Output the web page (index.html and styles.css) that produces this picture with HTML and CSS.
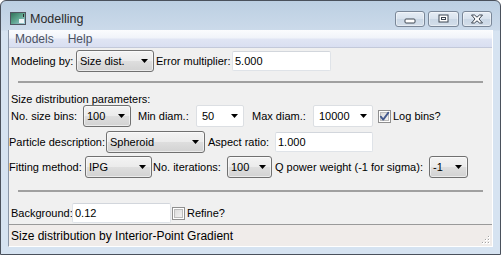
FILE: index.html
```html
<!DOCTYPE html>
<html>
<head>
    <title>Modelling</title>
    <meta charset="utf-8">
    <link rel="stylesheet" href="styles.css">
</head>
<body>
    <div class="window">
        <!-- 标题栏 -->
        <div class="titlebar">
            <svg class="app-icon" width="16" height="13" viewBox="0 0 16 13">
                <defs>
                    <linearGradient id="iconFill" x1="0" y1="0" x2="1" y2="1">
                        <stop offset="0" stop-color="#2f6e55"/>
                        <stop offset="0.5" stop-color="#5fa58f"/>
                        <stop offset="1" stop-color="#a9cfe3"/>
                    </linearGradient>
                </defs>
                <rect x="0.5" y="0.5" width="15" height="12" fill="url(#iconFill)" stroke="#505560"/>
                <rect x="9" y="7" width="5" height="4" fill="#eef3f6"/>
                <rect x="13" y="2" width="1" height="3" fill="#2b2b2b"/>
            </svg>
            <span class="title">Modelling</span>
            <div class="caption-buttons">
                <button class="cap-btn cap-min">
                    <svg width="12" height="6" viewBox="0 0 12 6"><rect x="1" y="1" width="10" height="4" rx="1" fill="#fff" stroke="#3d4652"/></svg>
                </button>
                <button class="cap-btn cap-max">
                    <svg width="11" height="9" viewBox="0 0 11 9"><rect x="1" y="1" width="9" height="7" fill="#fff" stroke="#3d4652"/><rect x="3" y="3" width="5" height="3" fill="#3d4652"/><rect x="4" y="4" width="3" height="1" fill="#fff"/></svg>
                </button>
                <button class="cap-btn cap-close">
                    <svg width="14" height="10" viewBox="0 0 14 10"><path d="M1.5 1h3l2.5 2.2L9.5 1h3L9 5l3.5 4h-3L7 6.8 4.5 9h-3L5 5z" fill="#fff" stroke="#3d4652" stroke-linejoin="round"/></svg>
                </button>
            </div>
        </div>

        <div class="client">
            <!-- 菜单栏 -->
            <div class="menubar">
                <span class="menu-item">Models</span>
                <span class="menu-item">Help</span>
            </div>

            <div class="content">
                <div class="row">
                    <span class="lab w65">Modeling by:</span>
                    <div class="combo w78"><span>Size dist.</span><svg class="arrow" viewBox="0 0 7 4"><path d="M0 0h7L3.5 4z"/></svg></div>
                    <span class="lab w78 pl2">Error multiplier:</span>
                    <div class="input w99">5.000</div>
                </div>

                <div class="sep sep-top"></div>

                <div class="group-title">Size distribution parameters:</div>

                <div class="row">
                    <span class="lab w72">No. size bins:</span>
                    <div class="combo w48"><span>100</span><svg class="arrow" viewBox="0 0 7 4"><path d="M0 0h7L3.5 4z"/></svg></div>
                    <span class="lab w65 pl7">Min diam.:</span>
                    <div class="combo edit w48"><span>50</span><svg class="arrow" viewBox="0 0 7 4"><path d="M0 0h7L3.5 4z"/></svg></div>
                    <span class="lab w69 pl8">Max diam.:</span>
                    <div class="combo edit w60"><span>10000</span><svg class="arrow" viewBox="0 0 7 4"><path d="M0 0h7L3.5 4z"/></svg></div>
                    <span class="checkbox ml5 checked"><svg width="11" height="11" viewBox="0 0 11 11"><path d="M1.8 5.6 L4.2 8.6 L9.4 1.6" fill="none" stroke="#44598d" stroke-width="1.8" stroke-linecap="round" stroke-linejoin="round"/></svg></span>
                    <span class="lab ml2">Log bins?</span>
                </div>

                <div class="row row-tight gap4">
                    <span class="lab w97">Particle description:</span>
                    <div class="combo w99"><span>Spheroid</span><svg class="arrow" viewBox="0 0 7 4"><path d="M0 0h7L3.5 4z"/></svg></div>
                    <span class="lab w70 pl3">Aspect ratio:</span>
                    <div class="input w98">1.000</div>
                </div>

                <div class="row row-tight gap3">
                    <span class="lab w76">Fitting method:</span>
                    <div class="combo w67"><span>IPG</span><svg class="arrow" viewBox="0 0 7 4"><path d="M0 0h7L3.5 4z"/></svg></div>
                    <span class="lab w75 pl1">No. iterations:</span>
                    <div class="combo w45"><span>100</span><svg class="arrow" viewBox="0 0 7 4"><path d="M0 0h7L3.5 4z"/></svg></div>
                    <span class="lab w157 pl3">Q power weight (-1 for sigma):</span>
                    <div class="combo w39"><span>-1</span><svg class="arrow" viewBox="0 0 7 4"><path d="M0 0h7L3.5 4z"/></svg></div>
                </div>

                <div class="sep sep-bottom"></div>

                <div class="row row-last">
                    <span class="lab w61">Background:</span>
                    <div class="input w99">0.12</div>
                    <span class="checkbox ml1"></span>
                    <span class="lab ml2">Refine?</span>
                </div>
            </div>

            <!-- 状态栏 -->
            <div class="statusbar">
                <span>Size distribution by Interior-Point Gradient</span>
                <svg class="grip" width="9" height="9" viewBox="0 0 9 9">
                    <rect x="6" y="0" width="2" height="2" fill="#fff"/><rect x="6" y="0" width="1" height="1" fill="#a3a3a3"/>
                    <rect x="3" y="3" width="2" height="2" fill="#fff"/><rect x="3" y="3" width="1" height="1" fill="#a3a3a3"/>
                    <rect x="6" y="3" width="2" height="2" fill="#fff"/><rect x="6" y="3" width="1" height="1" fill="#a3a3a3"/>
                    <rect x="0" y="6" width="2" height="2" fill="#fff"/><rect x="0" y="6" width="1" height="1" fill="#a3a3a3"/>
                    <rect x="3" y="6" width="2" height="2" fill="#fff"/><rect x="3" y="6" width="1" height="1" fill="#a3a3a3"/>
                    <rect x="6" y="6" width="2" height="2" fill="#fff"/><rect x="6" y="6" width="1" height="1" fill="#a3a3a3"/>
                </svg>
            </div>
        </div>
    </div>
</body>
</html>
```

FILE: styles.css
```css
/* 全局 */
body {
    margin: 0;
    background: #fff;
    font-family: "Liberation Sans", Arial, sans-serif;
    font-size: 11px;
    color: #000;
}

/* 窗口外框 */
.window {
    width: 501px;
    height: 255px;
    box-sizing: border-box;
    border: 1px solid #4a515c;
    border-radius: 6px 6px 0 0;
    background: linear-gradient(#bccfe2, #cbdaea 29px, #d6e3f1 30px);
    display: flex;
    flex-direction: column;
}

/* 标题栏 */
.titlebar {
    height: 29px;
    box-sizing: border-box;
    padding: 6px 8px 0 9px;
    display: flex;
    align-items: center;
}
.app-icon {
    display: block;
}
.title {
    margin-left: 4px;
    font-size: 12.5px;
    color: #2b2b2b;
}
.caption-buttons {
    margin-left: auto;
    display: flex;
    gap: 3px;
}
.cap-btn {
    width: 30px;
    height: 16px;
    padding: 0;
    border: 1px solid #7a8798;
    border-radius: 3px;
    background: linear-gradient(#e6edf5, #d8e2ed 50%, #cad7e5 51%, #d3deea);
    box-shadow: inset 0 0 0 1px rgba(255, 255, 255, 0.45);
    display: flex;
    align-items: center;
    justify-content: center;
}
.cap-btn svg {
    display: block;
}
.cap-min svg {
    margin-top: 5px;
}
.cap-max {
    width: 31px;
}

/* 客户区 */
.client {
    flex: 1;
    margin: 0 7px 7px;
    border-left: 1px solid #8b97a8;
    border-right: 1px solid #fff;
    border-bottom: 1px solid #fff;
    background: #f0f0f0;
    display: flex;
    flex-direction: column;
}

/* 菜单栏 */
.menubar {
    height: 18px;
    box-sizing: border-box;
    border-bottom: 1px solid #c3c9da;
    background: linear-gradient(#fbfcfe, #f1f4fa 45%, #e0e5f4 55%, #d9dff1);
    display: flex;
    align-items: center;
    gap: 2px;
}
.menu-item {
    padding: 0 6px;
    font-size: 12px;
    color: #4a5162;
}

/* 内容 */
.content {
    flex: 1;
    padding-top: 2px;
}
.row {
    height: 22px;
    padding-left: 2px;
    display: flex;
    align-items: center;
}
.row-tight {
    padding-left: 0;
}
.gap4 { margin-top: 4px; }
.gap3 { margin-top: 3px; }
.row-last { margin-top: 10px; }

.sep {
    height: 2px;
    margin: 0 9px;
    background: #a0a0a0;
}
.sep-top { margin-top: 9px; }
.sep-bottom { margin-top: 12px; }

.group-title {
    margin-top: 10px;
    height: 12px;
    line-height: 12px;
    padding-left: 2px;
}

/* 标签 */
.lab {
    white-space: nowrap;
    box-sizing: border-box;
}
.w39 { width: 39px; }
.w45 { width: 45px; }
.w48 { width: 48px; }
.w60 { width: 60px; }
.w61 { width: 61px; }
.w65 { width: 65px; }
.w67 { width: 67px; }
.w69 { width: 69px; }
.w70 { width: 70px; }
.w72 { width: 72px; }
.w75 { width: 75px; }
.w76 { width: 76px; }
.w78 { width: 78px; }
.w97 { width: 97px; }
.w98 { width: 98px; }
.w99 { width: 99px; }
.w157 { width: 157px; }
.pl1 { padding-left: 1px; }
.pl2 { padding-left: 2px; }
.pl3 { padding-left: 3px; }
.pl7 { padding-left: 7px; }
.pl8 { padding-left: 8px; }
.ml1 { margin-left: 1px; }
.ml2 { margin-left: 2px; }
.ml5 { margin-left: 5px; }

/* 下拉框 */
.combo {
    height: 22px;
    box-sizing: border-box;
    flex-shrink: 0;
    padding: 0 5px 0 3px;
    border: 1px solid #707070;
    border-radius: 3px;
    background: linear-gradient(#f3f3f3, #ebebeb 50%, #dedede 51%, #d2d2d2);
    box-shadow: inset 0 0 0 1px rgba(255, 255, 255, 0.55);
    display: flex;
    align-items: center;
    justify-content: space-between;
}
.combo.edit {
    padding-left: 5px;
    border-color: #dcdfe3;
    border-radius: 2px;
    background: #fff;
    box-shadow: none;
}
.arrow {
    width: 7px;
    height: 4px;
    display: block;
    fill: #000;
}

/* 输入框 */
.input {
    height: 20px;
    line-height: 18px;
    box-sizing: border-box;
    flex-shrink: 0;
    padding-left: 2px;
    border: 1px solid #dfe3e8;
    border-top-color: #d2d6dc;
    border-radius: 2px;
    background: #fff;
}

/* 复选框 */
.checkbox {
    width: 13px;
    height: 13px;
    box-sizing: border-box;
    flex-shrink: 0;
    border: 1px solid #8f8f8f;
    background: #f4f4f4;
    box-shadow: inset 0 0 0 1px #fff, inset 0 0 0 2px #bcbcbc;
    background-image: linear-gradient(135deg, #d7d7d7, #f7f7f7);
    display: flex;
    align-items: center;
    justify-content: center;
}
.checkbox svg {
    display: block;
}

/* 状态栏 */
.statusbar {
    height: 22px;
    box-sizing: border-box;
    border-top: 1px solid #9a9a9a;
    padding: 0 1px 0 2px;
    background: #f0ecea;
    font-size: 12px;
    display: flex;
    align-items: center;
    justify-content: space-between;
}
.grip {
    align-self: flex-end;
    margin-bottom: 1px;
    display: block;
}
```
